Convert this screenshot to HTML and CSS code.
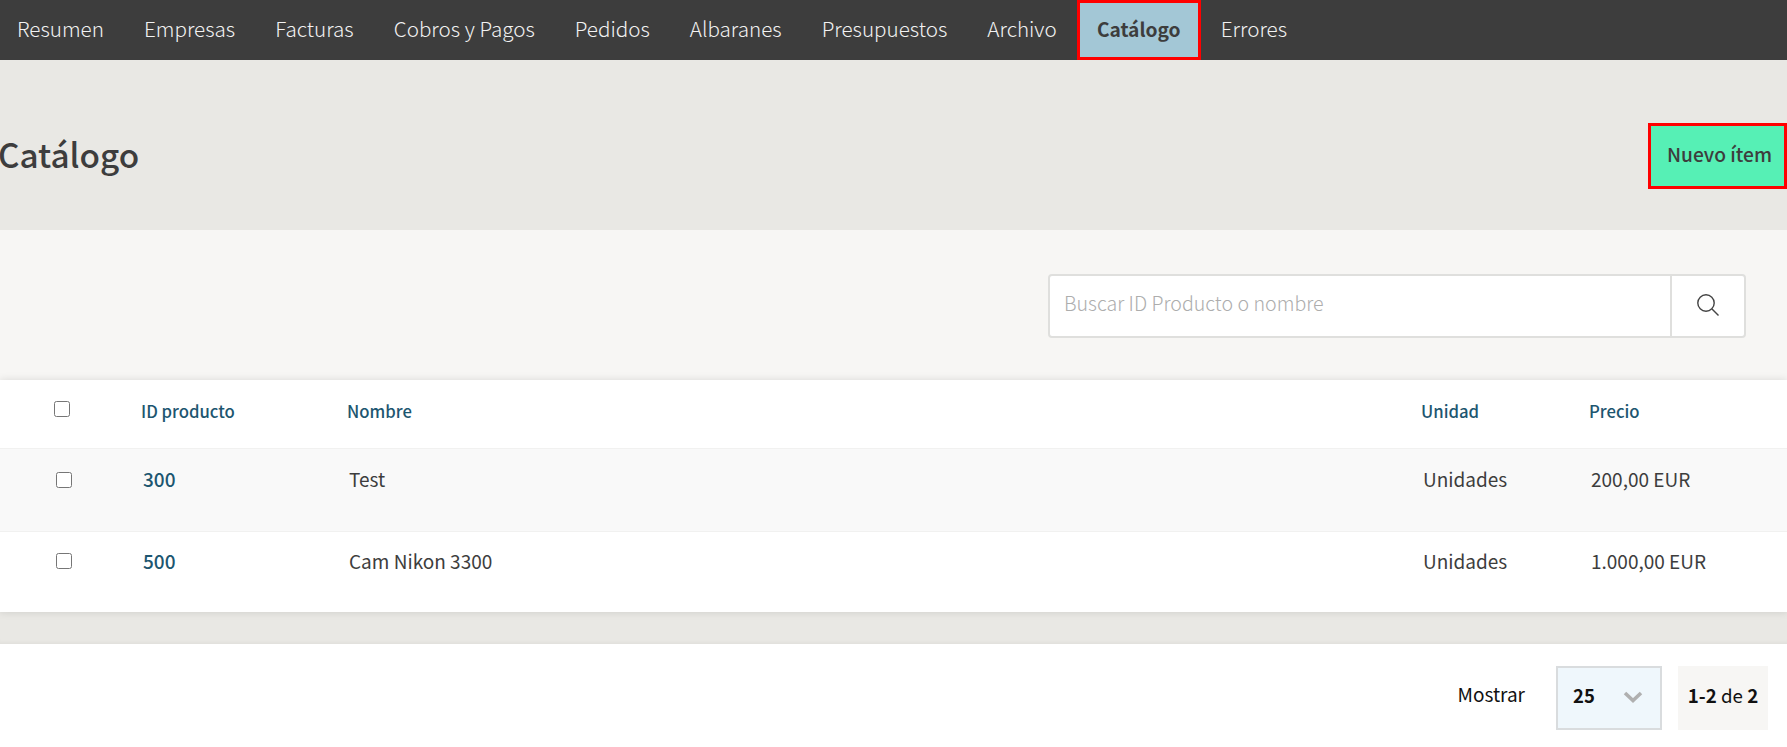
FILE: index.html
```html
<!DOCTYPE html>
<html lang="es">
<head>
<meta charset="utf-8">
<title>Catálogo</title>
<link rel="stylesheet" href="styles.css">
</head>
<body>
<nav class="nav">
  <a class="nav-item">Resumen</a>
  <a class="nav-item">Empresas</a>
  <a class="nav-item">Facturas</a>
  <a class="nav-item">Cobros y Pagos</a>
  <a class="nav-item">Pedidos</a>
  <a class="nav-item">Albaranes</a>
  <a class="nav-item">Presupuestos</a>
  <a class="nav-item">Archivo</a>
  <a class="nav-item nav-active">Catálogo</a>
  <a class="nav-item">Errores</a>
</nav>
<header class="head">
  <h1 class="title">Catálogo</h1>
  <button class="new-btn" type="button">Nuevo ítem</button>
</header>
<section class="filter">
  <div class="search">
    <input class="search-input" type="text" placeholder="Buscar ID Producto o nombre">
    <button class="search-btn" type="button" aria-label="Buscar">
      <svg width="24" height="24" viewBox="0 0 24 24" fill="none" stroke="#444" stroke-width="1.4"><circle cx="10" cy="10" r="8.2"/><path d="M16 16l6.5 6.5"/></svg>
    </button>
  </div>
</section>
<section class="table">
  <div class="row row-head">
    <span class="cell"><input class="check" type="checkbox"></span>
    <span class="cell">ID producto</span>
    <span class="cell">Nombre</span>
    <span class="cell">Unidad</span>
    <span class="cell">Precio</span>
  </div>
  <div class="row row-data row-odd">
    <span class="cell"><input class="check" type="checkbox"></span>
    <a class="cell id-link">300</a>
    <span class="cell">Test</span>
    <span class="cell">Unidades</span>
    <span class="cell">200,00 EUR</span>
  </div>
  <div class="row row-data row-even">
    <span class="cell"><input class="check" type="checkbox"></span>
    <a class="cell id-link">500</a>
    <span class="cell">Cam Nikon 3300</span>
    <span class="cell">Unidades</span>
    <span class="cell">1.000,00 EUR</span>
  </div>
</section>
<div class="spacer"></div>
<footer class="pager">
  <span class="pager-label">Mostrar</span>
  <div class="select">
    <span class="select-value">25</span>
    <svg class="chevron" width="20" height="12" viewBox="0 0 20 12" fill="none" stroke="#b0b0b0" stroke-width="3.6"><path d="M2 2l8 7.5L18 2"/></svg>
  </div>
  <div class="count"><span><b>1-2</b> de <b>2</b></span></div>
</footer>
</body>
</html>
```
FILE: styles.css
```css
* { box-sizing: border-box; }
html, body { margin: 0; padding: 0; }
body {
  width: 1787px;
  height: 747px;
  overflow: hidden;
  background: #fff;
  color: #3d3d3d;
  font-family: "Noto Sans CJK JP", "Noto Sans", sans-serif;
  font-size: 19px;
}
.nav {
  display: flex;
  height: 60px;
  background: #3d3d3d;
}
.nav-item {
  display: flex;
  align-items: center;
  height: 60px;
  padding: 0 20px 4px;
  color: #f2f2f2;
  font-size: 20.65px;
  font-weight: 300;
  line-height: 30px;
}
.nav-item:first-child { padding-left: 17px; }
.nav-active {
  background: #a3c7d6;
  color: #3d3d3d;
  font-size: 19.2px;
  font-weight: 700;
  border: 3px solid #f00;
  padding: 0 17px 2px;
  height: 60px;
  width: 124px;
  justify-content: center;
}
.head {
  display: flex;
  align-items: center;
  justify-content: space-between;
  height: 170px;
  padding-top: 22px;
  background: #e9e8e4;
}
.title {
  margin: 0 0 4px -2px;
  font-size: 33.3px;
  font-weight: 500;
  line-height: 44px;
}
.new-btn {
  width: 139px;
  height: 66px;
  padding: 0 0 4px 4px;
  background: #56f0b5;
  border: 3px solid #f00;
  color: #3d3d3d;
  font-family: inherit;
  font-size: 19.2px;
  font-weight: 500;
}
.filter {
  display: flex;
  justify-content: flex-end;
  height: 150px;
  padding: 44px 41px 0 0;
  background: #f7f6f4;
}
.search {
  display: flex;
  width: 698px;
  height: 64px;
  background: #fff;
  border: 2px solid #dfdfdd;
  border-radius: 4px;
}
.search-input {
  flex: 1;
  min-width: 0;
  padding: 0 0 7px 14px;
  border: 0;
  outline: 0;
  background: transparent;
  font-family: inherit;
  font-size: 19.6px;
  font-weight: 300;
  color: #3d3d3d;
}
.search-input::placeholder { color: #adadad; opacity: 1; }
.search-btn {
  display: flex;
  align-items: center;
  justify-content: center;
  width: 74px;
  padding: 0 0 3px;
  background: transparent;
  border: 0;
  border-left: 2px solid #dfdfdd;
}
.table {
  position: relative;
  background: #fff;
  box-shadow: 0 0 8px rgba(0, 0, 0, 0.12);
}
.row {
  display: grid;
  grid-template-columns: 87px 206px 1074px 168px 1fr;
}
.cell { display: block; }
.check { display: block; width: 16px; height: 16px; margin: 0; }
.row-head {
  height: 68px;
  padding: 19px 0 0 54px;
  color: #1d5670;
  font-size: 16.7px;
  font-weight: 500;
  line-height: 24px;
}
.row-head .check { margin-top: 2px; }
.row-data {
  padding: 18px 0 0 56px;
  line-height: 24px;
  border-top: 1px solid #f1f1f0;
}
.row-data .check { margin-top: 5px; }
.row-odd { height: 83px; background: #f9f9f9; }
.row-even { height: 81px; padding-top: 17px; background: #fff; }
.row-even .check { margin-top: 4px; }
.id-link { color: #1d5670; font-weight: 500; }
.spacer {
  height: 32px;
  background: #e9e8e4;
  box-shadow: inset 0 -4px 4px -3px rgba(0, 0, 0, 0.05);
}
.pager {
  display: flex;
  align-items: center;
  justify-content: flex-end;
  padding: 22px 19px 0 0;
  color: #111;
}
.pager-label { margin-right: 31px; padding-bottom: 8px; line-height: 24px; }
.select {
  display: flex;
  align-items: center;
  justify-content: space-between;
  width: 106px;
  height: 64px;
  padding: 0 17px 0 15px;
  background: #eff7fc;
  border: 2px solid #d9dcde;
  margin-right: 16px;
}
.select-value { font-size: 18.5px; font-weight: 700; padding-bottom: 6px; }
.chevron { margin-bottom: 2px; }
.count {
  display: flex;
  align-items: center;
  justify-content: center;
  width: 90px;
  height: 64px;
  padding-bottom: 8px;
  font-size: 18.7px;
  background: #f7f6f4;
}
.count b { font-weight: 700; }
```
